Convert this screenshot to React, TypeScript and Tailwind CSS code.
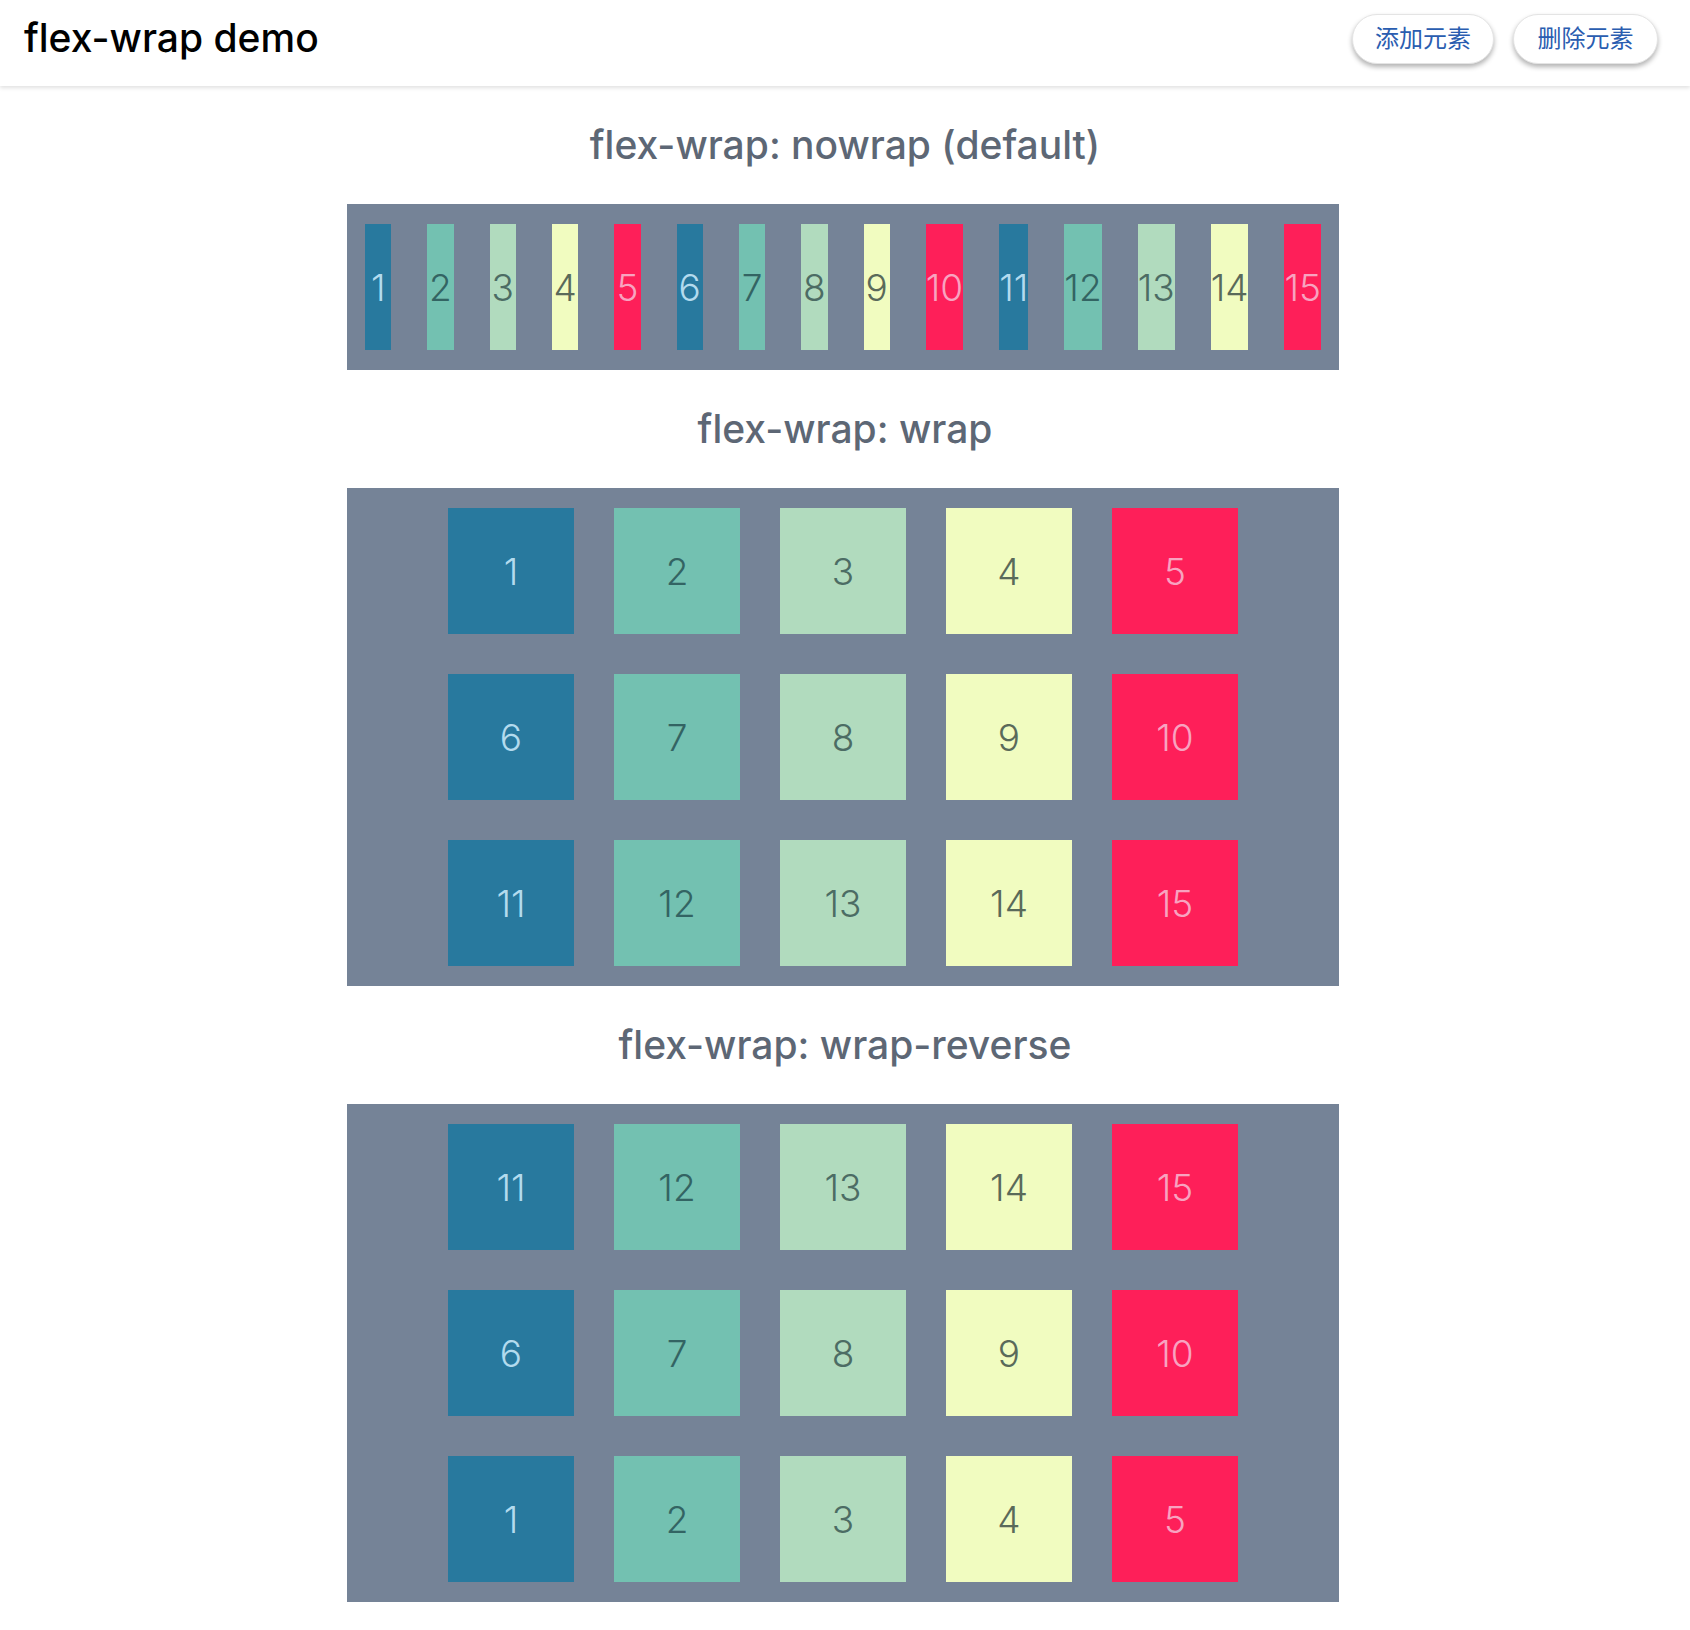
import React from "react";

const palette = [
  "bg-[#28799e] text-[#b3dbee]",
  "bg-[#73c1b1] text-[#336463]",
  "bg-[#b1dbbe] text-[#4c6c64]",
  "bg-[#f1fcc0] text-[#5a6a5a]",
  "bg-[#fe1f59] text-[#f8a3c0]",
];

const items = Array.from({ length: 15 }, (_, i) => i + 1);

function Box({ n, tight }: { n: number; tight?: boolean }) {
  return (
    <div
      className={`${palette[(n - 1) % 5]} ${
        tight ? "mx-[18px] my-[20px]" : "mx-[20px] my-[20px]"
      } flex h-[126px] w-[126px] shrink items-center justify-center text-[37px] font-light leading-none`}
    >
      {n}
    </div>
  );
}

function Section({
  title,
  wrap,
}: {
  title: string;
  wrap: "nowrap" | "wrap" | "reverse";
}) {
  return (
    <section>
      <h2 className="flex h-[118px] items-center justify-center text-[39px] font-medium text-[#5d6775]">
        {title}
      </h2>
      <div
        className={`mx-auto flex w-[992px] -translate-x-[2px] bg-[#758397] ${
          wrap === "nowrap"
            ? "flex-nowrap"
            : wrap === "wrap"
            ? "flex-wrap justify-center"
            : "flex-wrap-reverse justify-center"
        }`}
      >
        {items.map((n) => (
          <Box key={n} n={n} tight={wrap === "nowrap"} />
        ))}
      </div>
    </section>
  );
}

export default function App() {
  return (
    <div
      className="min-h-[1630px] bg-white pb-6"
      style={{ fontFamily: "Inter, 'Noto Sans CJK SC', sans-serif" }}
    >
      <header className="flex h-[86px] items-center justify-between pb-[9px] pl-6 pr-8 shadow-[0_2px_4px_rgba(0,0,0,0.12)]">
        <h1 className="text-[39px] font-medium text-black">flex-wrap demo</h1>
        <div className="flex gap-[19px]">
          <button className="h-[50px] w-[142px] rounded-full border border-[#e4e4e4] bg-white text-[24px] text-[#2a5db0] shadow-[0_3px_5px_rgba(0,0,0,0.3)]">
            添加元素
          </button>
          <button className="h-[50px] w-[145px] rounded-full border border-[#e4e4e4] bg-white text-[24px] text-[#2a5db0] shadow-[0_3px_5px_rgba(0,0,0,0.3)]">
            删除元素
          </button>
        </div>
      </header>
      <Section title="flex-wrap: nowrap (default)" wrap="nowrap" />
      <Section title="flex-wrap: wrap" wrap="wrap" />
      <Section title="flex-wrap: wrap-reverse" wrap="reverse" />
    </div>
  );
}
